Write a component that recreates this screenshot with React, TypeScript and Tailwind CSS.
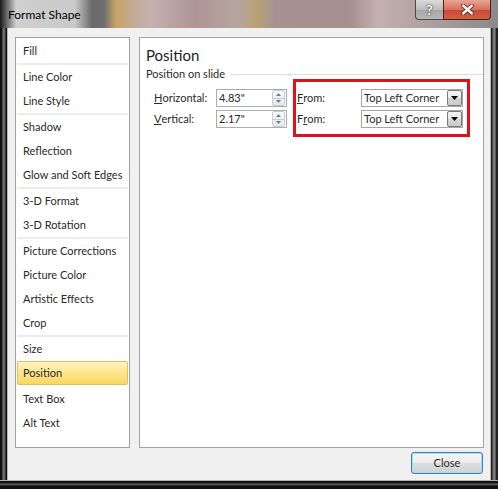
import React from "react";

const FONT = { fontFamily: "Lato, 'Liberation Sans', sans-serif" };

type Entry = { label: string } | { sep: true } | { gap: true };

const items: Entry[] = [
  { label: "Fill" },
  { sep: true },
  { label: "Line Color" },
  { label: "Line Style" },
  { sep: true },
  { label: "Shadow" },
  { label: "Reflection" },
  { label: "Glow and Soft Edges" },
  { sep: true },
  { label: "3-D Format" },
  { label: "3-D Rotation" },
  { sep: true },
  { label: "Picture Corrections" },
  { label: "Picture Color" },
  { label: "Artistic Effects" },
  { label: "Crop" },
  { sep: true },
  { label: "Size" },
  { label: "Position" },
  { gap: true },
  { label: "Text Box" },
  { label: "Alt Text" },
];

function Spinner() {
  return (
    <div className="flex flex-col w-[13px] h-[16px] my-auto mr-[1px] border border-[#c8cdd4] rounded-[2px] bg-[linear-gradient(to_bottom,#fbfbfb,#e6e8ec)]">
      <div className="flex-1 flex items-center justify-center border-b border-[#c8cdd4]">
        <svg width="5" height="3" viewBox="0 0 5 3">
          <path d="M0 3 L2.5 0 L5 3 Z" fill="#6b7d99" />
        </svg>
      </div>
      <div className="flex-1 flex items-center justify-center">
        <svg width="5" height="3" viewBox="0 0 5 3">
          <path d="M0 0 L2.5 3 L5 0 Z" fill="#6b7d99" />
        </svg>
      </div>
    </div>
  );
}

function NumInput({ value }: { value: string }) {
  return (
    <div className="flex h-[18px] w-[71px] border border-[#abadb3] bg-white">
      <div className="flex-1 pl-[2px] text-[11px] leading-[16px] text-[#2a2a2a]">{value}</div>
      <Spinner />
    </div>
  );
}

function Dropdown() {
  return (
    <div className="flex h-[18px] w-[102px] border border-[#a5a5a5] bg-white">
      <div className="flex-1 pl-[2px] text-[11px] leading-[16px] text-[#2a2a2a] whitespace-nowrap">
        Top Left Corner
      </div>
      <div className="w-[15px] h-[16px] flex items-center justify-center border border-[#7a7a7a] rounded-[2px] bg-[linear-gradient(to_bottom,#f4f4f4,#e6e6e6_50%,#d4d4d4_51%,#cacaca)]">
        <svg width="7" height="4" viewBox="0 0 7 4">
          <path d="M0 0 L7 0 L3.5 4 Z" fill="#000" />
        </svg>
      </div>
    </div>
  );
}

export default function App() {
  return (
    <div className="w-[498px] h-[489px] flex flex-col overflow-hidden bg-[#111]" style={FONT}>
      {/* Title bar */}
      <div className="h-[28px] flex items-start justify-between bg-[linear-gradient(to_right,#1a1a1a_0px,#555_5px,#cfcfcf_16px,#c9c9c9_75px,#6a6a6a_92px,#6f6f6f_104px,#c8a468_116px,#c2aa92_132px,#c6b0b0_150px,#ae9696_195px,#b6a6a0_238px,#b9a274_256px,#a69292_275px,#a68f8f_350px,#c4b0b0_378px,#b6a6a6_410px,#8a8a8a_498px)]">
        <div className="pl-[8px] pt-[7px] text-[12px] leading-[16px] text-black">Format Shape</div>
        <div className="flex mr-[7px]">
          <div className="w-[28px] h-[20px] flex items-center justify-center border border-[#4a4a4a] border-t-0 border-r-0 rounded-bl-[4px] bg-[linear-gradient(to_bottom,#dadada,#bdbdbd_50%,#a5a5a5_51%,#b8b8b8)]">
            <span
              className="text-[14px] font-bold leading-none text-white"
              style={{ textShadow: "0 0 2px #333, 0 0 1px #333" }}
            >
              ?
            </span>
          </div>
          <div className="w-[48px] h-[20px] flex items-center justify-center border border-[#5a1a10] border-t-0 rounded-br-[4px] bg-[linear-gradient(to_bottom,#e9a596,#d8705c_50%,#c84a34_51%,#d0604a)]">
            <svg width="13" height="11" viewBox="0 0 13 11">
              <path d="M2 1.5 L11 9.5 M11 1.5 L2 9.5" stroke="#4a1a14" strokeWidth="4" strokeLinecap="round" />
              <path d="M2 1.5 L11 9.5 M11 1.5 L2 9.5" stroke="#fff" strokeWidth="2.4" strokeLinecap="round" />
            </svg>
          </div>
        </div>
      </div>

      {/* Middle */}
      <div className="flex h-[452px]">
        <div className="w-[8px] bg-[linear-gradient(to_right,#111_0px,#111_2px,#7a7a7a_3px,#5a5a5a_5px,#111_6px,#111_7px,#b4b4b4_7px)]" />
        <div className="flex-1 flex flex-col bg-[#f0f0f0] pt-[9px] pl-[7px] pr-[6px] pb-[6px]">
          <div className="flex gap-[9px] h-[411px]">
            {/* List */}
            <div className="w-[115px] border border-[#a0a0a0] bg-white pt-[1px] px-[1px] flex flex-col">
              {items.map((it, i) => {
                if ("sep" in it) return <div key={i} className="h-[2px] bg-[#ececec]" />;
                if ("gap" in it) return <div key={i} className="h-[2px]" />;
                const active = it.label === "Position";
                return (
                  <div
                    key={i}
                    className={
                      active
                        ? "h-[24px] flex items-center pl-[5px] text-[11px] text-[#2a2a2a] border border-[#e0bf5e] rounded-[2px] bg-[linear-gradient(to_bottom,#fff3c4,#fde58c_50%,#f9d860)]"
                        : "h-[24px] flex items-center pl-[6px] text-[11px] text-[#2a2a2a] whitespace-nowrap"
                    }
                  >
                    {it.label}
                  </div>
                );
              })}
            </div>

            {/* Panel */}
            <div className="flex-1 border border-[#a3a3a3] bg-white flex flex-col">
              <div className="pt-[7px] pl-[6px] text-[15px] leading-[20px] text-[#1e1e1e]">Position</div>
              <div className="mt-[1px] pl-[6px] flex items-center gap-[6px] h-[16px]">
                <span className="text-[11px] leading-[16px] text-[#2a2a2a] whitespace-nowrap">Position on slide</span>
                <div className="flex-1 h-px bg-[#d5dfe5]" />
              </div>
              <div className="mt-[7px] flex pl-[14px]">
                <div className="grid grid-cols-[62px_71px] gap-y-[3px]">
                  <div className="h-[18px] flex items-center text-[11px] text-[#2a2a2a]">
                    <span className="underline">H</span>orizontal:
                  </div>
                  <NumInput value={'4.83"'} />
                  <div className="h-[18px] flex items-center text-[11px] text-[#2a2a2a]">
                    <span className="underline">V</span>ertical:
                  </div>
                  <NumInput value={'2.17"'} />
                </div>
                <div className="relative ml-[10px] grid grid-cols-[64px_102px] gap-y-[3px]">
                  <div className="h-[18px] flex items-center text-[11px] text-[#2a2a2a]">
                    <span className="underline">F</span>rom:
                  </div>
                  <Dropdown />
                  <div className="h-[18px] flex items-center text-[11px] text-[#2a2a2a]">
                    F<span className="underline">r</span>om:
                  </div>
                  <Dropdown />
                  <div className="absolute left-[-4px] top-[-10px] w-[177px] h-[58px] border-[3px] border-[#e0101c]" />
                </div>
              </div>
            </div>
          </div>
          <div className="mt-[4px] flex justify-end pr-[1px]">
            <div className="w-[72px] h-[22px] flex items-center justify-center rounded-[3px] border border-[#3c7fb1] shadow-[inset_0_0_0_1px_#a6dcf5] bg-[linear-gradient(to_bottom,#f4f4f4,#ececec_50%,#dedede_51%,#d2d2d2)] text-[11px] text-[#2a2a2a]">
              Close
            </div>
          </div>
        </div>
        <div className="w-[8px] bg-[linear-gradient(to_left,#222_0px,#222_2px,#8a8a8a_3px,#6a6a6a_5px,#222_6px,#222_7px,#b4b4b4_7px)]" />
      </div>

      {/* Bottom frame */}
      <div className="h-[9px] bg-[linear-gradient(to_bottom,#b4b4b4_0px,#b4b4b4_1px,#111_1px,#111_3px,#6a6a6a_4px,#444_5px,#111_6px,#111_9px)]" />
    </div>
  );
}
